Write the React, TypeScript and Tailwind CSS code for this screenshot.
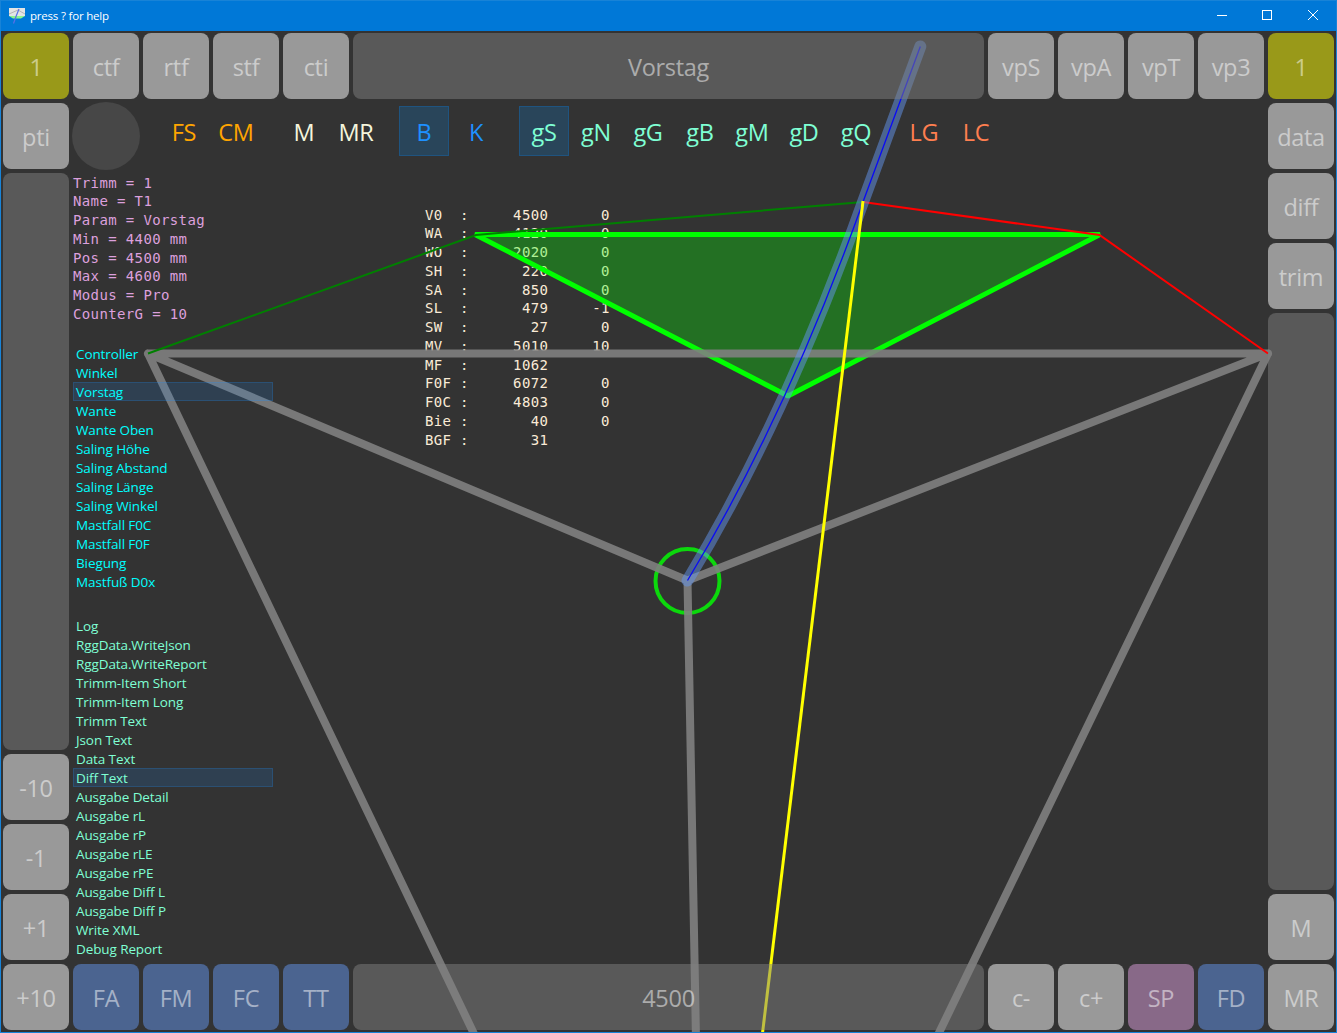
import React from "react";

const sans = "font-['Open_Sans','Noto_Sans',sans-serif]";
const mono = "font-['DejaVu_Sans_Mono',monospace]";

const tones = {
  gray: "bg-[#999999]",
  olive: "bg-[#999919]",
  blue: "bg-[#4b6490]",
  plum: "bg-[#886988]",
};

function Key({ label, tone = "gray" }: { label: string; tone?: keyof typeof tones }) {
  return (
    <button className={`flex size-[66px] shrink-0 items-center justify-center rounded-lg ${tones[tone]} text-white/50`}>
      <span className="pt-px">{label}</span>
    </button>
  );
}

function Bar({ label }: { label?: string }) {
  return (
    <div className="flex flex-1 items-center justify-center rounded-lg bg-[#808080]/50 text-white/50">
      {label && <span className="pt-px">{label}</span>}
    </div>
  );
}

const toolGroups = [
  { color: "text-[#ffa500]", items: ["FS", "CM"] },
  { color: "text-[#f5f5dc]", items: ["M", "MR"] },
  { color: "text-[#1e90ff]", items: ["B", "K"] },
  { color: "text-[#7fffd4]", items: ["gS", "gN", "gG", "gB", "gM", "gD", "gQ"] },
  { color: "text-[#ff7f50]", items: ["LG", "LC"] },
];

const info = `Trimm = 1
Name = T1
Param = Vorstag
Min = 4400 mm
Pos = 4500 mm
Max = 4600 mm
Modus = Pro
CounterG = 10`;

const values: [string, string, string][] = [
  ["V0", "4500", "0"],
  ["WA", "4120", "0"],
  ["WO", "2020", "0"],
  ["SH", "220", "0"],
  ["SA", "850", "0"],
  ["SL", "479", "-1"],
  ["SW", "27", "0"],
  ["MV", "5010", "10"],
  ["MF", "1062", ""],
  ["F0F", "6072", "0"],
  ["F0C", "4803", "0"],
  ["Bie", "40", "0"],
  ["BGF", "31", ""],
];

const params = ["Controller", "Winkel", "Vorstag", "Wante", "Wante Oben", "Saling Höhe", "Saling Abstand", "Saling Länge", "Saling Winkel", "Mastfall F0C", "Mastfall F0F", "Biegung", "Mastfuß D0x"];

const reports = ["Log", "RggData.WriteJson", "RggData.WriteReport", "Trimm-Item Short", "Trimm-Item Long", "Trimm Text", "Json Text", "Data Text", "Diff Text", "Ausgabe Detail", "Ausgabe rL", "Ausgabe rP", "Ausgabe rLE", "Ausgabe rPE", "Ausgabe Diff L", "Ausgabe Diff P", "Write XML", "Debug Report"];

function List({ items, selected, color }: { items: string[]; selected: string; color: string }) {
  return (
    <ul className={`relative z-10 w-[200px] text-[13.5px] leading-[19px] tracking-[-0.1px] ${color}`}>
      {items.map((item) => (
        <li
          key={item}
          className={`h-[19px] pt-px pl-[3px] whitespace-nowrap ${item === selected ? "bg-[#1e90ff]/15 outline-1 -outline-offset-1 outline-[#1e90ff]/20" : ""}`}
        >
          {item}
        </li>
      ))}
    </ul>
  );
}

function Rigg() {
  return (
    <svg className="pointer-events-none absolute inset-0" width="1335" height="1001" viewBox="1 31 1335 1001" fill="none">
      <circle cx="687.5" cy="581" r="32" stroke="#0cd80c" strokeWidth="4" />
      <path d="M475 234.5H1100L788 396Z" fill="#00ff00" fillOpacity=".3" stroke="#00ff00" strokeWidth="5" strokeLinejoin="bevel" />
      <g opacity=".9" stroke="#808080" strokeWidth="8" strokeLinecap="round" strokeLinejoin="round">
        <path d="M476 1038L148 353.5H1268L935.5 1040M148 353.5L687.5 580.5L1268 353.5M687.5 580.5L696 1040" />
      </g>
      <path d="M148 353.5L476 235L863 202" stroke="#008000" strokeWidth="2" />
      <path d="M863 202L1099.5 235L1268 353.5" stroke="#ff0000" strokeWidth="2" />
      <path d="M687.5 580.5C759 462 817 331 863 202L920.3 46.5" stroke="#6495ed" strokeOpacity=".5" strokeWidth="12" strokeLinecap="round" />
      <path d="M687.5 580.5C759 462 817 331 863 202L920.3 46.5" stroke="#0a0af5" strokeWidth="1.3" />
      <path d="M863 201L762.4 1034" stroke="#ffff00" strokeWidth="3" />
    </svg>
  );
}

function TitleBar() {
  return (
    <header className="flex h-[30px] items-center bg-[#0078d7] pl-2 text-white">
      <svg width="16" height="16" viewBox="0 0 16 16" fill="none">
        <path d="M0 0H16V8H0Z" fill="#e4e4e4" />
        <path d="M0 8H16L12 10.5H4Z" fill="#8cf58c" />
        <path d="M0 6L9 2L16 6" stroke="#a8a8a8" strokeWidth=".8" />
        <path d="M4.5 15.5L7 8.5L10 1" stroke="#5a6fe8" strokeWidth="1.2" />
      </svg>
      <span className="ml-[5px] text-[11.5px] tracking-[-0.2px]">press ? for help</span>
      <div className="ml-auto flex">
        <svg width="138" height="30" viewBox="0 0 138 30" fill="none" stroke="white">
          <path d="M19 14.5H29" />
          <rect x="64.5" y="9.5" width="9" height="9" />
          <path d="M110 9L120 19M120 9L110 19" />
        </svg>
      </div>
    </header>
  );
}

export default function App() {
  return (
    <div className={`flex h-[1033px] w-[1337px] flex-col overflow-hidden border border-[#1883d7] bg-[#333333] ${sans}`}>
      <TitleBar />
      <main className="relative flex flex-1 gap-1 p-[2px] text-[23.5px] leading-8 tracking-[-0.3px]">
        <Rigg />
        <div className="relative z-10 flex flex-col gap-1">
          <Key label="1" tone="olive" />
          <Key label="pti" />
          <Bar />
          {["-10", "-1", "+1", "+10"].map((l) => <Key key={l} label={l} />)}
        </div>

        <div className="flex flex-1 flex-col">
          <div className="relative z-10 flex gap-1">
            {["ctf", "rtf", "stf", "cti"].map((l) => <Key key={l} label={l} />)}
            <Bar label="Vorstag" />
            {["vpS", "vpA", "vpT", "vp3"].map((l) => <Key key={l} label={l} />)}
          </div>

          <div className="flex-1">
            <div className="flex pt-[3px]">
              <div className="-ml-px size-[68px] rounded-full bg-[#474747]" />
              <div className="mt-1 ml-[19px] flex gap-[18px]">
                {toolGroups.map((group) => (
                  <div key={group.color} className={`flex gap-[2px] ${group.color}`}>
                    {group.items.map((item) => (
                      <div
                        key={item}
                        className={`flex size-[50px] items-center justify-center pt-px ${item === "B" || item === "gS" ? "border border-[#1f5480] bg-[#29455a]" : ""}`}
                      >
                        {item}
                      </div>
                    ))}
                  </div>
                ))}
              </div>
            </div>

            <div className="flex">
              <div className="w-[352px]">
                <pre className={`mt-[3.6px] h-[170.4px] text-[14px] leading-[18.75px] tracking-[0.37px] text-[#dda0dd] ${mono}`}>{info}</pre>
                <List items={params} selected="Vorstag" color="text-[#00ffff]" />
                <div className="h-[25px]" />
                <List items={reports} selected="Diff Text" color="text-[#7fffd4]" />
              </div>
              <div className={`mt-[35.6px] text-[14px] leading-[18.75px] tracking-[0.37px] text-[#faebd7] ${mono}`}>
                {values.map(([name, value, diff]) => (
                  <div key={name} className="flex h-[18.75px]">
                    <span className="w-[35px]">{name}</span>
                    <span>:</span>
                    <span className="w-[79.5px] text-right">{value}</span>
                    <span className="w-[61.6px] text-right">{diff}</span>
                  </div>
                ))}
              </div>
            </div>
          </div>

          <div className="relative z-10 flex gap-1">
            {["FA", "FM", "FC", "TT"].map((l) => <Key key={l} label={l} tone="blue" />)}
            <Bar label="4500" />
            <Key label="c-" />
            <Key label="c+" />
            <Key label="SP" tone="plum" />
            <Key label="FD" tone="blue" />
          </div>
        </div>

        <div className="relative z-10 flex flex-col gap-1">
          <Key label="1" tone="olive" />
          {["data", "diff", "trim"].map((l) => <Key key={l} label={l} />)}
          <Bar />
          <Key label="M" />
          <Key label="MR" />
        </div>
      </main>
    </div>
  );
}
